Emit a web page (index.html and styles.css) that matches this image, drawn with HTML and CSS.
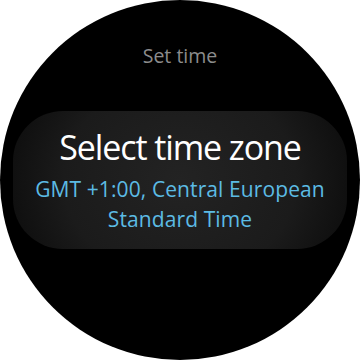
FILE: index.html
```html
<!DOCTYPE html>
<html>
<head>
<meta charset="utf-8">
<link rel="stylesheet" href="styles.css">
</head>
<body>
<div class="watch">
  <div class="header">Set time</div>
  <div class="panel">
    <div class="title">Select time zone</div>
    <div class="sub">GMT +1:00, Central European<br>Standard Time</div>
  </div>
</div>
</body>
</html>
```
FILE: styles.css
```css
html, body { margin: 0; padding: 0; background: #fff; }
.watch {
  width: 360px; height: 360px; border-radius: 50%;
  background: #000; overflow: hidden;
  display: flex; flex-direction: column; align-items: center;
  font-family: "Open Sans", "Noto Sans", sans-serif;
}
.header {
  margin-top: 41px; height: 30px; line-height: 30px;
  font-size: 19.5px; color: #8c8c8c;
}
.panel {
  margin-top: 40px; width: 334px; height: 138px; border-radius: 50px;
  background: radial-gradient(ellipse 58% 120% at 50% 50%, #232323 0%, #1b1b1b 60%, #0a0a0a 100%);
  display: flex; flex-direction: column; align-items: center;
  box-sizing: border-box; padding-top: 16px;
}
.title {
  font-size: 34px; color: #fff; line-height: 40px; letter-spacing: -1.1px;
}
.sub {
  margin-top: 7px;
  font-size: 21px; color: #5cbbe4; line-height: 30px; text-align: center; letter-spacing: 0.1px;
}
```
